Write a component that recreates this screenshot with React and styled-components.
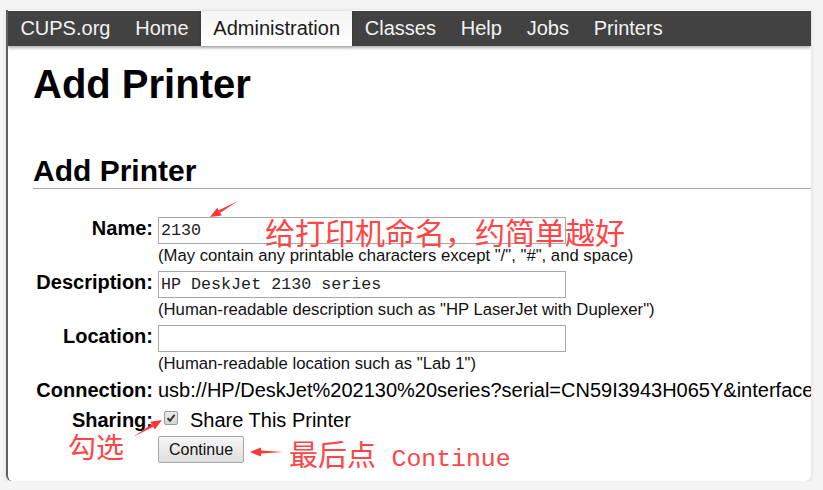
import styled, { createGlobalStyle } from "styled-components";

const GlobalStyle = createGlobalStyle`
  body {
    margin: 0;
    background: #f4f4f4;
    font-family: "Liberation Sans", Arial, sans-serif;
  }
`;

const Card = styled.div`
  position: relative;
  margin: 10px 0 0 6px;
  width: 805px;
  height: 471px;
  box-sizing: border-box;
  background: #fff;
  border-left: 2px solid #5d6166;
  border-radius: 0 0 6px 6px;
  box-shadow: 0 1px 4px rgba(0, 0, 0, 0.12);
  overflow: hidden;
`;

const Nav = styled.nav`
  display: flex;
  height: 35px;
  margin-top: 1px;
  background: #424242;
  box-shadow: 0 2px 3px rgba(0, 0, 0, 0.3);
`;

const NavItem = styled.a`
  padding: 0 12.4px;
  line-height: 35px;
  font-size: 20px;
  color: ${(p) => (p.$active ? "#1a1a1a" : "#f2f2f2")};
  background: ${(p) => (p.$active ? "linear-gradient(#f4f4f4, #fff)" : "transparent")};
  box-shadow: ${(p) => (p.$active ? "0 0 3px rgba(0,0,0,0.25)" : "none")};
  text-decoration: none;
  white-space: nowrap;
`;

const Content = styled.div`
  padding-left: 25px;
`;

const Title = styled.h1`
  margin: 14px 0 0;
  font-size: 40px;
  line-height: 48px;
  font-weight: bold;
  color: #000;
`;

const Subtitle = styled.h2`
  margin: 46px 0 0;
  font-size: 30px;
  line-height: 34px;
  font-weight: bold;
  color: #000;
  border-bottom: 1px solid #a8a8a8;
`;

const Form = styled.div`
  display: grid;
  grid-template-columns: 120px 1fr;
  column-gap: 5px;
  row-gap: 4px;
  align-items: baseline;
  margin-top: 27px;
`;

const Label = styled.div`
  text-align: right;
  font-size: 20px;
  font-weight: bold;
  line-height: 24px;
  color: #000;
  white-space: nowrap;
`;

const Field = styled.div`
  display: flex;
  flex-direction: column;
  align-items: flex-start;
  min-width: 0;
`;

const Input = styled.input`
  box-sizing: border-box;
  width: 408px;
  height: 27px;
  padding: 0 2px;
  border: 1px solid #a9a9a9;
  font-family: "Liberation Mono", "Courier New", monospace;
  font-size: 16.7px;
  color: #222;
  outline: none;
`;

const Hint = styled.div`
  padding-top: 2px;
  font-size: 16.7px;
  line-height: 20px;
  color: #111;
  white-space: nowrap;
`;

const Value = styled.div`
  font-size: 20px;
  line-height: 24px;
  color: #000;
  white-space: nowrap;
`;

const ShareRow = styled.div`
  display: flex;
  align-items: baseline;
  gap: 12px;
  margin-top: 2px;
  padding-left: 6px;
  font-size: 20px;
  line-height: 24px;
  color: #000;
`;

const Check = styled.span`
  display: inline-flex;
  align-self: center;
  align-items: center;
  justify-content: center;
  width: 14px;
  height: 14px;
  box-sizing: border-box;
  border: 1px solid #9a9a9a;
  border-radius: 2px;
  background: linear-gradient(#ececec, #d4d4d4);
  transform: translateY(-2px);
`;

const Button = styled.button`
  margin-top: 0;
  height: 27px;
  padding: 0 10px;
  font-family: "Liberation Sans", Arial, sans-serif;
  font-size: 16px;
  color: #111;
  border: 1px solid #a6a6a6;
  border-radius: 2px;
  background: linear-gradient(#f6f6f6, #dedede);
`;

const Overlay = styled.svg`
  position: absolute;
  left: -2px;
  top: 0;
  pointer-events: none;
`;

const Note = styled.div`
  position: absolute;
  left: ${(p) => p.$x}px;
  top: ${(p) => p.$y}px;
  font-family: "Noto Sans CJK SC", sans-serif;
  font-size: ${(p) => p.$size}px;
  line-height: 1;
  color: #ff4545;
  white-space: nowrap;
`;

const Mono = styled.span`
  margin-left: 9px;
  font-family: "Liberation Mono", "Courier New", monospace;
  font-size: 24.8px;
`;

const tabs = ["CUPS.org", "Home", "Administration", "Classes", "Help", "Jobs", "Printers"];

// arrows in card coordinates: tail -> head
const arrows = [
  [232, 191, 204, 207],
  [127, 427, 156, 410],
  [277, 442, 244, 442],
];

const Arrow = ({ x1, y1, x2, y2 }) => {
  const dx = x2 - x1;
  const dy = y2 - y1;
  const len = Math.hypot(dx, dy);
  const ux = dx / len;
  const uy = dy / len;
  const head = 11;
  const half = 4.5;
  const bx = x2 - ux * head;
  const by = y2 - uy * head;
  const px = -uy;
  const py = ux;
  return (
    <g fill="#ff3535" stroke="none">
      <polygon
        points={`${x1},${y1} ${bx + px * 1.4},${by + py * 1.4} ${bx - px * 1.4},${by - py * 1.4}`}
      />
      <polygon
        points={`${x2},${y2} ${bx + px * half},${by + py * half} ${bx - px * half},${by - py * half}`}
      />
    </g>
  );
};

export default function App() {
  return (
    <>
      <GlobalStyle />
      <Card>
        <Nav>
          {tabs.map((t) => (
            <NavItem key={t} $active={t === "Administration"}>
              {t}
            </NavItem>
          ))}
        </Nav>
        <Content>
          <Title>Add Printer</Title>
          <Subtitle>Add Printer</Subtitle>
          <Form>
            <Label>Name:</Label>
            <Field>
              <Input defaultValue="2130" />
              <Hint>(May contain any printable characters except "/", "#", and space)</Hint>
            </Field>

            <Label>Description:</Label>
            <Field>
              <Input defaultValue="HP DeskJet 2130 series" />
              <Hint>(Human-readable description such as "HP LaserJet with Duplexer")</Hint>
            </Field>

            <Label>Location:</Label>
            <Field>
              <Input defaultValue="" />
              <Hint>(Human-readable location such as "Lab 1")</Hint>
            </Field>

            <Label>Connection:</Label>
            <Value>usb://HP/DeskJet%202130%20series?serial=CN59I3943H065Y&amp;interface=1</Value>

            <Label>Sharing:</Label>
            <ShareRow>
              <Check>
                <svg width="10" height="10" viewBox="0 0 10 10">
                  <path d="M1.5 5.2 L4 7.8 L8.6 1.8" fill="none" stroke="#333" strokeWidth="2" />
                </svg>
              </Check>
              Share This Printer
            </ShareRow>

            <div />
            <Field>
              <Button>Continue</Button>
            </Field>
          </Form>
        </Content>

        <Overlay width="805" height="471">
          {arrows.map(([x1, y1, x2, y2], i) => (
            <Arrow key={i} x1={x1} y1={y1} x2={x2} y2={y2} />
          ))}
        </Overlay>
        <Note $x={257} $y={206} $size={30}>给打印机命名，约简单越好</Note>
        <Note $x={60} $y={422} $size={28}>勾选</Note>
        <Note $x={281} $y={429} $size={29}>
          最后点 <Mono>Continue</Mono>
        </Note>
      </Card>
    </>
  );
}
